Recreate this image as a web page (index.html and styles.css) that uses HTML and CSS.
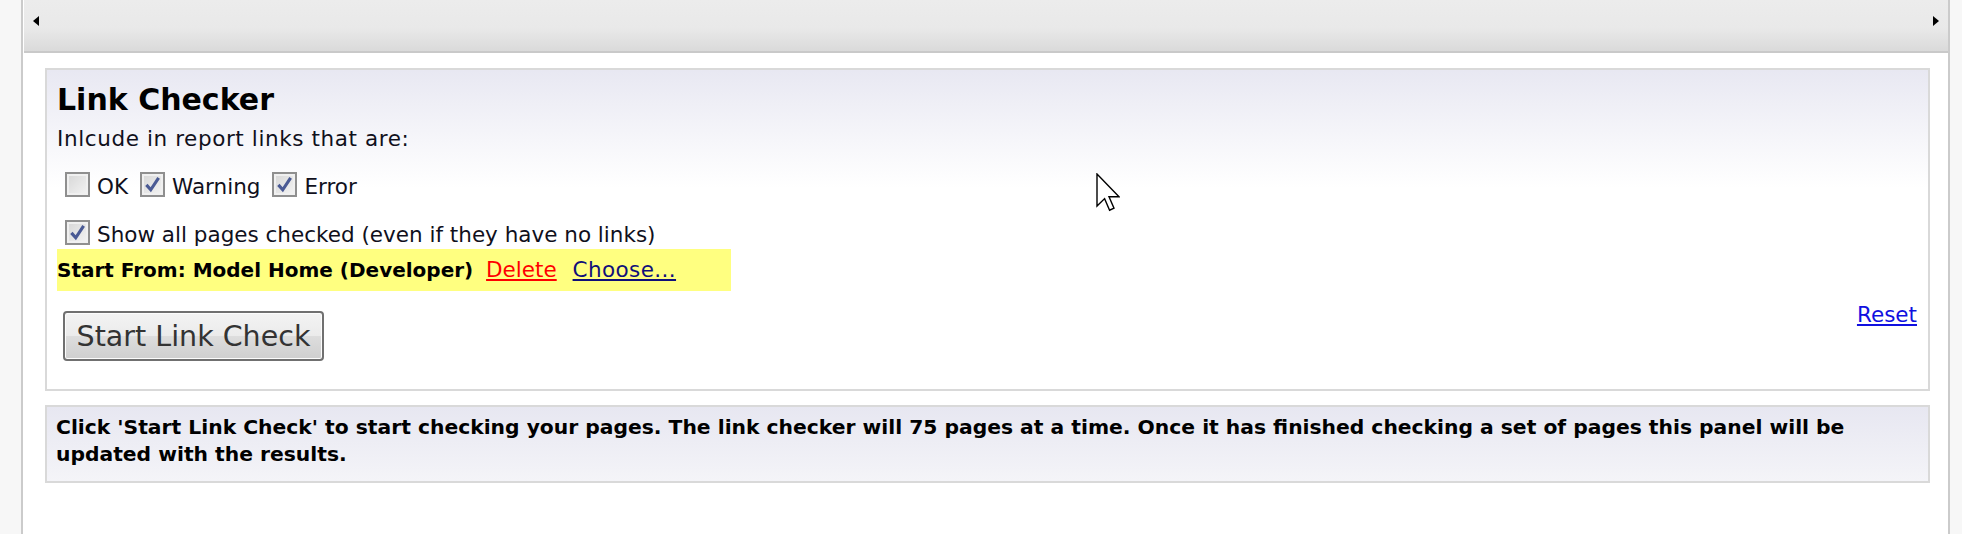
FILE: index.html
```html
<!DOCTYPE html>
<html lang="en">
<head>
    <meta charset="UTF-8">
    <title>Link Checker</title>
    <link rel="stylesheet" href="styles.css">
</head>
<body>
    <div class="frame">
        <div class="toolbar">
            <span class="arrow arrow-left"></span>
            <span class="arrow arrow-right"></span>
        </div>
        <div class="content">
            <section class="panel panel-main">
                <h1>Link Checker</h1>
                <p class="intro">Inlcude in report links that are:</p>
                <div class="check-row">
                    <label class="check"><span class="box"></span>OK</label>
                    <label class="check"><span class="box"><svg viewBox="0 0 12 12"><path d="M2.5 6.2 L5 9 L9.5 2.2" /></svg></span>Warning</label>
                    <label class="check"><span class="box"><svg viewBox="0 0 12 12"><path d="M2.5 6.2 L5 9 L9.5 2.2" /></svg></span>Error</label>
                </div>
                <div class="check-row">
                    <label class="check"><span class="box"><svg viewBox="0 0 12 12"><path d="M2.5 6.2 L5 9 L9.5 2.2" /></svg></span>Show all pages checked (even if they have no links)</label>
                </div>
                <div class="start-from"><b>Start From: Model Home (Developer)</b> <a href="#" class="delete">Delete</a> <a href="#" class="choose">Choose...</a></div>
                <div class="actions">
                    <button class="start-btn">Start Link Check</button>
                    <a href="#" class="reset">Reset</a>
                </div>
            </section>
            <section class="panel panel-info">
                Click 'Start Link Check' to start checking your pages. The link checker will 75 pages at a time. Once it has finished checking a set of pages this panel will be updated with the results.
            </section>
        </div>
    </div>
    <svg class="cursor" width="24" height="40" viewBox="0 0 12 20">
        <path d="M0.5 0.5 L0.5 16.5 L4.3 12.8 L6.8 18.6 L9 17.6 L6.5 11.9 L11.5 11.9 Z" fill="#fff" stroke="#000" stroke-width="0.7" stroke-linejoin="miter" />
    </svg>
</body>
</html>
```

FILE: styles.css
```css
* {
    box-sizing: border-box;
    margin: 0;
    padding: 0;
}
body {
    font-family: "DejaVu Sans", sans-serif;
    font-size: 21.5px;
    line-height: 26px;
    color: #10101c;
    background: #f7f7f7;
    position: relative;
    height: 534px;
    overflow: hidden;
}
.frame {
    margin-left: 21px;
    width: 1929px;
    height: 534px;
    border-left: 2px solid #cbcbcb;
    border-right: 2px solid #cbcbcb;
    background: #fff;
}
.toolbar {
    display: flex;
    justify-content: space-between;
    align-items: flex-start;
    height: 53px;
    margin-left: 1px;
    padding: 16px 9px 0 9px;
    background: linear-gradient(#ececec 0, #e9e9e9 55%, #dadada 100%);
    border-bottom: 2px solid #c9c9c9;
}
.arrow {
    width: 0;
    height: 0;
    border-top: 5px solid transparent;
    border-bottom: 5px solid transparent;
}
.arrow-left {
    border-right: 6px solid #000;
}
.arrow-right {
    border-left: 6px solid #000;
}
.content {
    padding: 15px 18px 0 22px;
}
.panel {
    border: 2px solid #d9d9d9;
}
.panel-main {
    padding: 12px 11px 28px 10px;
    background: linear-gradient(#e8e8f2 0, #f6f6fa 70px, #ffffff 118px);
}
.panel-main h1 {
    font-size: 30px;
    line-height: 36px;
    font-weight: bold;
    color: #000;
}
.intro {
    margin-top: 8px;
    letter-spacing: 0.6px;
}
.check-row {
    display: flex;
    align-items: flex-end;
    margin-top: 20px;
    padding-left: 8px;
}
.check-row + .check-row {
    margin-top: 23px;
}
.check {
    display: flex;
    align-items: flex-end;
    margin-right: 12px;
    line-height: 21px;
}
.box {
    display: inline-block;
    width: 25px;
    height: 25px;
    margin-right: 7px;
    border: 2px solid #8f8f8f;
    background: linear-gradient(135deg, #d6d6d6, #f4f4f4);
    box-shadow: inset 0 0 0 2px #f0f0f0;
}
.box svg {
    display: block;
    width: 21px;
    height: 21px;
    fill: none;
    stroke: #4a5a94;
    stroke-width: 1.8;
}
.start-from {
    width: 674px;
    margin-top: 4px;
    line-height: 41px;
    background: #ffff80;
    color: #000;
}
.start-from b {
    font-size: 20px;
}
.delete {
    color: #ff0000;
    margin-left: 6px;
}
.choose {
    color: #10107a;
    margin-left: 9px;
    letter-spacing: 0.4px;
}
.actions {
    display: flex;
    justify-content: space-between;
    align-items: flex-start;
    margin-top: 11px;
}
.start-btn {
    margin: 9px 0 0 6px;
    width: 261px;
    height: 50px;
    font-family: inherit;
    font-size: 28.5px;
    color: #333;
    border: 2px solid #707070;
    border-radius: 4px;
    background: linear-gradient(#f3f3f3 0, #ebebeb 50%, #dddddd 51%, #cfcfcf 100%);
    box-shadow: inset 0 0 0 1px #fcfcfc;
}
.reset {
    color: #1010e0;
}
.panel-info {
    margin-top: 14px;
    padding: 7px 40px 13px 9px;
    font-size: 20.3px;
    font-weight: bold;
    line-height: 27px;
    color: #000;
    background: linear-gradient(#e7e7f1, #f4f4f8);
}
.cursor {
    position: absolute;
    left: 1096px;
    top: 173px;
}
```
